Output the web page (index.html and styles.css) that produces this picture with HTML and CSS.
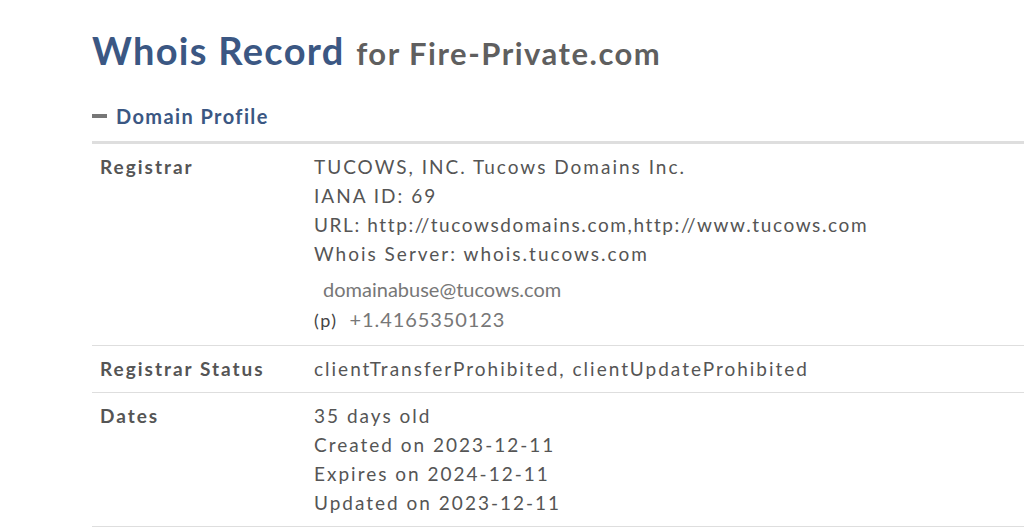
FILE: index.html
```html
<!DOCTYPE html>
<html lang="en">
<head>
  <meta charset="UTF-8" />
  <title>Whois Record for Fire-Private.com</title>
  <link rel="stylesheet" href="styles.css">
</head>
<body>
  <div class="page">
    <h1>Whois Record <span class="for">for Fire-Private.com</span></h1>

    <h2 class="profile"><span class="dash"></span>Domain Profile</h2>

    <div class="record">
      <div class="row">
        <div class="label">Registrar</div>
        <div class="value">
          <div>TUCOWS, INC. Tucows Domains Inc.</div>
          <div>IANA ID: 69</div>
          <div class="url">URL: http://tucowsdomains.com,http://www.tucows.com</div>
          <div>Whois Server: whois.tucows.com</div>
          <div class="contact email">domainabuse@tucows.com</div>
          <div class="contact"><span class="tag">(p)</span><span class="phone">+1.4165350123</span></div>
        </div>
      </div>
      <div class="row">
        <div class="label">Registrar Status</div>
        <div class="value">clientTransferProhibited, clientUpdateProhibited</div>
      </div>
      <div class="row">
        <div class="label">Dates</div>
        <div class="value">
          <div>35 days old</div>
          <div>Created on 2023-12-11</div>
          <div>Expires on 2024-12-11</div>
          <div>Updated on 2023-12-11</div>
        </div>
      </div>
    </div>
  </div>
</body>
</html>
```

FILE: styles.css
```css
body {
  margin: 0;
  font-family: Lato, 'Open Sans', sans-serif;
  background: #fff;
  color: #555;
}
.page {
  padding: 27px 0 0 92px;
}
h1 {
  margin: 0;
  font-size: 38px;
  font-weight: 700;
  color: #3b5783;
  letter-spacing: 1.3px;
  line-height: 46px;
}
h1 .for {
  font-size: 31px;
  color: #5f5f5f;
  letter-spacing: 1.5px;
  margin-left: 1px;
}
.profile {
  display: flex;
  align-items: center;
  margin: 26px 0 0;
  font-size: 20px;
  font-weight: 700;
  color: #3b5783;
  letter-spacing: 1.4px;
  line-height: 28px;
}
.dash {
  width: 15px;
  height: 4px;
  background: #777;
  margin-right: 9px;
}
.record {
  margin-top: 11px;
  border-top: 3px solid #dedede;
}
.row {
  display: flex;
  padding: 8px 0 9px 8px;
  border-bottom: 1px solid #dedede;
  font-size: 19px;
  letter-spacing: 2px;
  line-height: 29px;
}
.row:first-child {
  padding-bottom: 10px;
}
.label {
  width: 214px;
  flex-shrink: 0;
  font-weight: 700;
}
.url {
  letter-spacing: 1.6px;
}
.contact {
  letter-spacing: 0;
  font-size: 20px;
  color: #777;
  line-height: 30px;
}
.email {
  margin-top: 6px;
  padding-left: 9px;
}
.tag {
  color: #444;
  font-size: 18px;
  letter-spacing: 1.5px;
  margin-right: 12px;
}
.phone {
  letter-spacing: 0.9px;
}
```
